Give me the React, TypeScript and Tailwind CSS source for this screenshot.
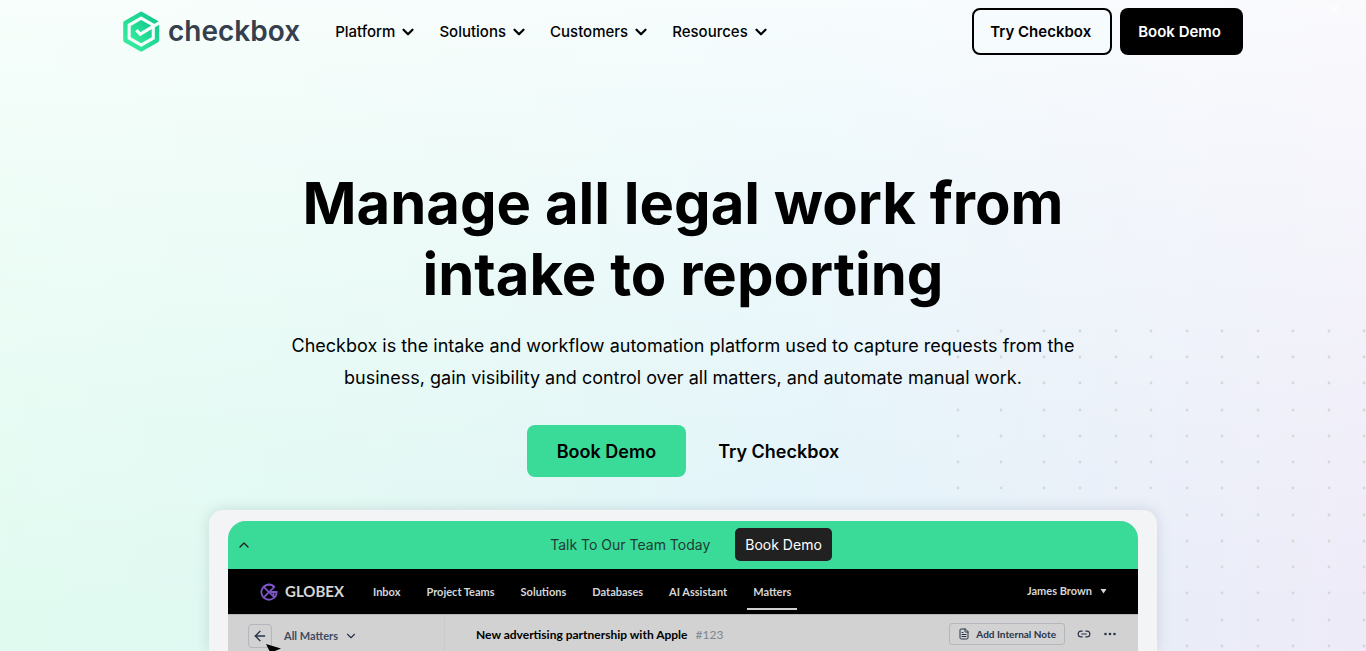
import type { ReactNode } from "react";
import { ArrowLeft, ChevronDown, ChevronUp, FileText, Link2, X } from "lucide-react";

const menuItems = ["Platform", "Solutions", "Customers", "Resources"];
const appTabs = ["Inbox", "Project Teams", "Solutions", "Databases", "AI Assistant", "Matters"];

const dotColumns = [4, 47, 90, 126, 162, 197, 233, 268, 304, 339, 375, 410];
const dotRows = [2, 28, 54, 81, 107, 133, 159, 186, 212, 238, 264, 291, 317];

export default function App() {
  return (
    <div className="relative isolate flex min-h-screen flex-col overflow-hidden bg-[linear-gradient(to_bottom,rgba(255,255,255,0.75)_0%,rgba(255,255,255,0.5)_25%,rgba(255,255,255,0.2)_65%,rgba(255,255,255,0)_95%),linear-gradient(96deg,#e1fbf0_0%,#dff7f3_35%,#dff3f9_58%,#e6eff8_76%,#eeebf8_100%)] font-['Inter',sans-serif] text-black">
      <DotGrid />
      <button type="button" aria-label="Close" className="absolute top-[2px] right-6 text-white">
        <X className="h-4 w-4" strokeWidth={2} />
      </button>
      <SiteHeader />
      <main className="flex flex-1 flex-col items-center">
        <h1 className="mt-[105px] max-w-[900px] text-center text-[58px] leading-[71px] font-bold">
          Manage all legal work from
          <br />
          intake to reporting
        </h1>
        <p className="mt-5 max-w-[800px] text-center text-[18px] leading-8">
          Checkbox is the intake and workflow automation platform used to capture requests from the business, gain
          visibility and control over all matters, and automate manual work.
        </p>
        <div className="mt-[31px] flex items-center gap-8 text-[18px] font-semibold">
          <a href="#demo" className="flex h-[52px] items-center rounded-lg bg-[#3adb99] px-[30px]">
            Book Demo
          </a>
          <a href="#try">Try Checkbox</a>
        </div>
        <ProductPreview />
      </main>
    </div>
  );
}

function SiteHeader() {
  return (
    <header className="mx-auto flex h-[63px] w-full max-w-[1120px] items-center">
      <a href="#home" className="flex items-center gap-2">
        <LogoMark />
        <span className="pb-[2px] text-[28px] leading-8 font-semibold text-[#363f4d]">checkbox</span>
      </a>
      <nav className="ml-[35px] flex gap-[22px] pt-px text-[15px] font-medium">
        {menuItems.map((item) => (
          <button key={item} type="button" className="flex items-center gap-1">
            {item}
            <ChevronDown className="h-[18px] w-[18px]" strokeWidth={3} />
          </button>
        ))}
      </nav>
      <div className="ml-auto flex gap-2 text-[15px] font-semibold">
        <a href="#try" className="flex h-[47px] items-center rounded-lg border-2 border-black bg-[#f6fbfd] pt-px pr-[19px] pl-4">
          Try Checkbox
        </a>
        <a href="#demo" className="flex h-[47px] items-center rounded-lg bg-black pt-px pr-[22px] pl-[18px] text-white">
          Book Demo
        </a>
      </div>
    </header>
  );
}

function ProductPreview() {
  return (
    <section className="mt-[33px] flex w-full max-w-[948px] flex-1 flex-col rounded-t-[14px] bg-[#f3f4f6] px-[19px] pt-[11px] shadow-[0_0_14px_rgba(60,90,100,0.18)]">
      <div className="flex flex-1 flex-col overflow-hidden rounded-t-[18px] bg-[#d2d2d2]">
        <div className="flex h-12 items-center bg-[#3adb99]">
          <button type="button" aria-label="Collapse" className="flex w-8 justify-center text-[#212121]">
            <ChevronUp className="h-4 w-4" />
          </button>
          <div className="flex flex-1 items-center justify-center gap-[25px] pr-4 pb-[2px] text-[14px]">
            <span className="text-[#213c31]">Talk To Our Team Today</span>
            <a href="#demo" className="flex h-[33px] items-center rounded-[5px] bg-[#212121] px-[10px] text-white">
              Book Demo
            </a>
          </div>
        </div>
        <div className="flex h-[45px] items-center bg-black pr-[31px] pl-8 font-['Lato',sans-serif] text-[11px] font-bold text-[#d6d6d6]">
          <div className="flex items-center gap-[7px] text-[15px]">
            <GlobexMark />
            <span>GLOBEX</span>
          </div>
          <nav className="ml-4 flex self-stretch pt-[2px]">
            {appTabs.map((tab) => (
              <AppTab key={tab} active={tab === "Matters"}>
                {tab}
              </AppTab>
            ))}
          </nav>
          <button type="button" className="ml-auto flex items-center gap-2">
            James Brown
            <svg viewBox="0 0 7 5" className="h-[5px] w-[7px]" fill="currentColor">
              <path d="M.5 0h6L3.5 4.5z" />
            </svg>
          </button>
        </div>
        <div className="flex flex-1 border-t border-[#b8b8b8] font-['Lato',sans-serif] text-[11px] font-bold text-[#29344a]">
          <div className="relative flex w-[217px] items-start border-r border-[#cbcbcb] pt-[9px] pl-5">
            <button
              type="button"
              aria-label="Back"
              className="flex h-6 w-6 items-center justify-center rounded border border-[#b3b6bc]"
            >
              <ArrowLeft className="h-4 w-4" />
            </button>
            <button type="button" className="ml-3 flex h-6 items-center gap-[6px] text-[#414c60]">
              All Matters
              <ChevronDown className="h-[14px] w-[14px] text-[#29344a]" strokeWidth={2} />
            </button>
            <svg viewBox="0 0 18 14" className="absolute top-[29px] left-[38px] h-[14px] w-[18px]">
              <path d="M0 0 15 4.5 9 7 6.5 13z" fill="#000" />
            </svg>
          </div>
          <div className="flex flex-1 items-start pt-2 pr-[21px] pl-[31px]">
            <h2 className="h-6 text-[12px] leading-6 text-black">
              New advertising partnership with Apple
              <span className="ml-2 font-normal text-[#80858f]">#123</span>
            </h2>
            <div className="ml-auto flex h-[22px] items-center">
              <button
                type="button"
                className="flex h-[22px] items-center gap-[6px] rounded-[3px] border border-[#b3b6bc] px-2 text-[10px]"
              >
                <FileText className="h-3 w-3" strokeWidth={2} />
                Add Internal Note
              </button>
              <button type="button" aria-label="Copy link" className="ml-3">
                <Link2 className="h-[14px] w-[14px]" strokeWidth={2} />
              </button>
              <button type="button" aria-label="More" className="ml-3">
                <svg viewBox="0 0 14 4" className="h-1 w-[14px]" fill="currentColor">
                  <circle cx="2.5" cy="2" r="1.3" />
                  <circle cx="7" cy="2" r="1.3" />
                  <circle cx="11.5" cy="2" r="1.3" />
                </svg>
              </button>
            </div>
          </div>
        </div>
      </div>
    </section>
  );
}

function AppTab({ active, children }: { active: boolean; children: ReactNode }) {
  return (
    <button type="button" className="relative px-[13px]">
      {children}
      {active ? <span className="absolute inset-x-[7px] bottom-1 h-[2px] bg-[#d0d0d0]" /> : null}
    </button>
  );
}

function LogoMark() {
  return (
    <svg viewBox="0 0 37 41" className="h-[41px] w-[37px]" aria-hidden="true">
      <defs>
        <linearGradient id="mark" x1="1" y1="0" x2="0" y2="1">
          <stop offset="0" stopColor="#10c78c" />
          <stop offset="1" stopColor="#38efa0" />
        </linearGradient>
        <mask id="tick">
          <rect width="37" height="41" fill="#fff" />
          <path d="M13.4 19.2 17.2 23.2 38 10.8" fill="none" stroke="#000" strokeWidth="3.2" />
        </mask>
      </defs>
      <g mask="url(#tick)">
        <path
          d="M18.2 2.8 34 11.8V29.3L18.2 38.3 2.4 29.3V11.8z"
          fill="none"
          stroke="url(#mark)"
          strokeWidth="4.4"
          strokeLinejoin="round"
        />
        <path d="M18.2 9 28.7 15V26.3L18.2 32.3 7.7 26.3V15z" fill="url(#mark)" />
      </g>
    </svg>
  );
}

function GlobexMark() {
  return (
    <svg viewBox="0 0 18 18" className="h-[18px] w-[18px]" fill="none" stroke="#7b55c7" strokeWidth="1.8" aria-hidden="true">
      <path d="M14.6 4A7.6 7.6 0 1 0 16.6 9H10.5" />
      <path d="M3.6 3.8 14.4 14.4M14.6 3.6 3.8 14.4" />
      <path d="M3.8 3.8C7 1 11 1 14.4 3.8M13.5 9v4.5" />
    </svg>
  );
}

function DotGrid() {
  return (
    <svg viewBox="0 0 412 322" className="absolute top-[329px] right-0 -z-10 h-[322px] w-[412px]" fill="#d2dad4" aria-hidden="true">
      {dotRows.map((y) => dotColumns.map((x) => <circle key={`${x}-${y}`} cx={x} cy={y} r="1.4" />))}
    </svg>
  );
}
